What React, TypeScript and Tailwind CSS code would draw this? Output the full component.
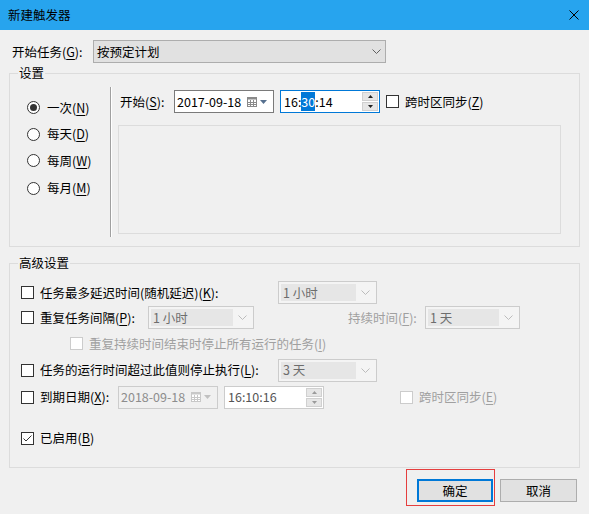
import React from 'react';

const U = ({ c }: { c: string }) => <span className="underline underline-offset-[2px]">{c}</span>;

function Check({ checked = false, disabled = false }: { checked?: boolean; disabled?: boolean }) {
  return (
    <span
      className={
        disabled
          ? 'w-[13px] h-[13px] border border-[#cccccc] bg-white flex items-center justify-center shrink-0'
          : 'w-[13px] h-[13px] border border-[#333333] bg-white flex items-center justify-center shrink-0'
      }
    >
      {checked && (
        <svg width="11" height="11" viewBox="0 0 11 11">
          <path d="M1.5 5.5 L4 8 L9.5 2.5" stroke="#333" strokeWidth="1" fill="none" />
        </svg>
      )}
    </span>
  );
}

function Radio({ checked = false }: { checked?: boolean }) {
  return (
    <span className="w-[13px] h-[13px] rounded-full border border-[#333333] bg-white flex items-center justify-center shrink-0">
      {checked && <span className="w-[7px] h-[7px] rounded-full bg-[#333333]" />}
    </span>
  );
}

function Chevron({ color }: { color: string }) {
  return (
    <svg width="9" height="5" viewBox="0 0 9 5">
      <path d="M0.5 0.5 L4.5 4.5 L8.5 0.5" stroke={color} strokeWidth="1" fill="none" />
    </svg>
  );
}

function DisabledCombo({ text, w }: { text: string; w: string }) {
  return (
    <div className={`${w} h-[23px] border border-[#cccccc] bg-[#f4f4f4] flex items-center p-[2px] shrink-0`}>
      <div className="flex-1 h-full bg-[#e6e6e6] flex items-center pl-[2px] text-[#6d6d6d]">{text}</div>
      <div className="w-[18px] flex items-center justify-center">
        <Chevron color="#bcbcbc" />
      </div>
    </div>
  );
}

function CalIcon({ disabled = false }: { disabled?: boolean }) {
  const stroke = disabled ? '#c8c8c8' : '#8a8a8a';
  const tri = disabled ? '#c0c0c0' : '#56708f';
  return (
    <div className="flex items-center gap-[3px]">
      <svg width="10" height="10" viewBox="0 0 10 10">
        <rect x="0.5" y="0.5" width="9" height="9" fill="#ffffff" stroke={stroke} />
        <rect x="0.5" y="0.5" width="9" height="2" fill={stroke} />
        <path d="M3.5 3 V9 M6.5 3 V9 M1 5.5 H9 M1 7.5 H9" stroke={stroke} strokeWidth="1" />
      </svg>
      <svg width="7" height="4" viewBox="0 0 7 4">
        <path d="M0 0 H7 L3.5 4 Z" fill={tri} />
      </svg>
    </div>
  );
}

function Spinner({ disabled = false }: { disabled?: boolean }) {
  const col = disabled ? '#9a9a9a' : '#222222';
  return (
    <div className="flex flex-col gap-[1px]">
      <div className="w-[16px] h-[9px] bg-[#e6e6e6] border border-[#d0d0d0] flex items-center justify-center">
        <svg width="5" height="3" viewBox="0 0 5 3">
          <path d="M0 3 H5 L2.5 0 Z" fill={col} />
        </svg>
      </div>
      <div className="w-[16px] h-[9px] bg-[#e6e6e6] border border-[#d0d0d0] flex items-center justify-center">
        <svg width="5" height="3" viewBox="0 0 5 3">
          <path d="M0 0 H5 L2.5 3 Z" fill={col} />
        </svg>
      </div>
    </div>
  );
}

export default function App() {
  return (
    <div className="w-[589px] h-[514px] bg-[#f0f0f0] flex flex-col text-[12.5px] leading-[16px] text-black font-['Noto_Sans_CJK_SC',sans-serif] overflow-hidden">
      {/* Title bar */}
      <div className="h-[30px] bg-[#27a4ee] flex items-center justify-between pl-[8px] pr-[10px] shrink-0">
        <span>新建触发器</span>
        <svg width="10" height="10" viewBox="0 0 10 10">
          <path d="M0.5 0.5 L9.5 9.5 M9.5 0.5 L0.5 9.5" stroke="#000" strokeWidth="1" />
        </svg>
      </div>

      {/* Start task row */}
      <div className="mt-[10px] h-[23px] flex items-center">
        <span className="w-[93px] pl-[12px] shrink-0">
          开始任务(<U c="G" />):
        </span>
        <div className="w-[293px] h-[23px] border border-[#adadad] bg-[#e1e1e1] flex items-center justify-between pl-[3px] pr-[4px]">
          <span>按预定计划</span>
          <Chevron color="#606060" />
        </div>
      </div>

      {/* 设置 group */}
      <div className="relative ml-[9px] mt-[10px] w-[571px] h-[174px] border border-[#dcdcdc] flex shrink-0">
        <span className="absolute left-[8px] top-[-9px] px-[1px] bg-[#f0f0f0]">设置</span>
        <div className="w-[100px] pt-[20px] pl-[17px] flex flex-col">
          <div className="h-[27px] flex items-center gap-[7px]">
            <Radio checked />
            <span>
              一次(<U c="N" />)
            </span>
          </div>
          <div className="h-[26px] flex items-center gap-[7px]">
            <Radio />
            <span>
              每天(<U c="D" />)
            </span>
          </div>
          <div className="h-[27px] flex items-center gap-[7px]">
            <Radio />
            <span>
              每周(<U c="W" />)
            </span>
          </div>
          <div className="h-[28px] flex items-center gap-[7px]">
            <Radio />
            <span>
              每月(<U c="M" />)
            </span>
          </div>
        </div>
        <div className="mt-[13px] h-[150px] w-[2px] border-l border-l-[#a0a0a0] border-r border-r-white" />
        <div className="pl-[6px] pt-[16px] flex flex-col">
          <div className="h-[23px] flex items-center">
            <span className="w-[56px] pl-[2px] shrink-0">
              开始(<U c="S" />):
            </span>
            <div className="w-[100px] h-[23px] border border-[#7a7a7a] bg-white flex items-center justify-between pl-[2px] pr-[6px]">
              <span>2017-09-18</span>
              <CalIcon />
            </div>
            <div className="ml-[6px] w-[100px] h-[23px] border border-[#0078d7] bg-white flex items-center justify-between pl-[3px] pr-[1px]">
              <span>
                16:<span className="bg-[#0078d7] text-white">30</span>:14
              </span>
              <Spinner />
            </div>
            <div className="ml-[6px] flex items-center gap-[6px]">
              <Check />
              <span>
                跨时区同步(<U c="Z" />)
              </span>
            </div>
          </div>
          <div className="mt-[12px] w-[443px] h-[109px] border border-[#dcdcdc]" />
        </div>
      </div>

      {/* 高级设置 group */}
      <div className="relative ml-[9px] mt-[16px] w-[571px] h-[205px] border border-[#dcdcdc] flex flex-col pt-[16px] shrink-0">
        <span className="absolute left-[8px] top-[-9px] px-[1px] bg-[#f0f0f0]">高级设置</span>

        <div className="h-[25px] flex items-center pl-[11px]">
          <Check />
          <span className="ml-[6px] w-[238px] shrink-0">
            任务最多延迟时间(随机延迟)(<U c="K" />):
          </span>
          <DisabledCombo text="1 小时" w="w-[99px]" />
        </div>

        <div className="h-[25px] flex items-center pl-[11px]">
          <Check />
          <span className="ml-[6px] w-[108px] shrink-0">
            重复任务间隔(<U c="P" />):
          </span>
          <DisabledCombo text="1 小时" w="w-[106px]" />
          <span className="ml-[94px] w-[77px] shrink-0 text-[#a0a0a0]">
            持续时间(<U c="F" />):
          </span>
          <DisabledCombo text="1 天" w="w-[95px]" />
        </div>

        <div className="h-[27px] flex items-center pl-[60px]">
          <Check disabled />
          <span className="ml-[6px] text-[#a0a0a0]">
            重复持续时间结束时停止所有运行的任务(<U c="I" />)
          </span>
        </div>

        <div className="h-[26px] flex items-center pl-[11px]">
          <Check />
          <span className="ml-[6px] w-[238px] shrink-0">
            任务的运行时间超过此值则停止执行(<U c="L" />):
          </span>
          <DisabledCombo text="3 天" w="w-[99px]" />
        </div>

        <div className="h-[28px] flex items-center pl-[11px]">
          <Check />
          <span className="ml-[6px] w-[78px] shrink-0">
            到期日期(<U c="X" />):
          </span>
          <div className="w-[100px] h-[23px] border border-[#cccccc] bg-[#f0f0f0] flex items-center justify-between pl-[2px] pr-[6px] text-[#8d8d8d]">
            <span>2018-09-18</span>
            <CalIcon disabled />
          </div>
          <div className="ml-[6px] w-[100px] h-[23px] border border-[#cccccc] bg-white flex items-center justify-between pl-[3px] pr-[1px] text-[#555555]">
            <span>16:10:16</span>
            <Spinner disabled />
          </div>
          <div className="ml-[76px] flex items-center gap-[6px]">
            <Check disabled />
            <span className="text-[#a0a0a0]">
              跨时区同步(<U c="E" />)
            </span>
          </div>
        </div>

        <div className="mt-[14px] h-[26px] flex items-center pl-[11px]">
          <Check checked />
          <span className="ml-[6px]">
            已启用(<U c="B" />)
          </span>
        </div>
      </div>

      {/* Buttons */}
      <div className="mt-[11px] flex justify-end gap-[7px] pr-[12px]">
        <div className="relative">
          <div className="w-[76px] h-[23px] border-2 border-[#0078d7] bg-[#e1e1e1] flex items-center justify-center">
            确定
          </div>
          <div className="absolute left-[-11px] top-[-10px] w-[89px] h-[37px] border border-[#e53e3e] pointer-events-none" />
        </div>
        <div className="w-[77px] h-[23px] border border-[#adadad] bg-[#e1e1e1] flex items-center justify-center">取消</div>
      </div>
    </div>
  );
}
